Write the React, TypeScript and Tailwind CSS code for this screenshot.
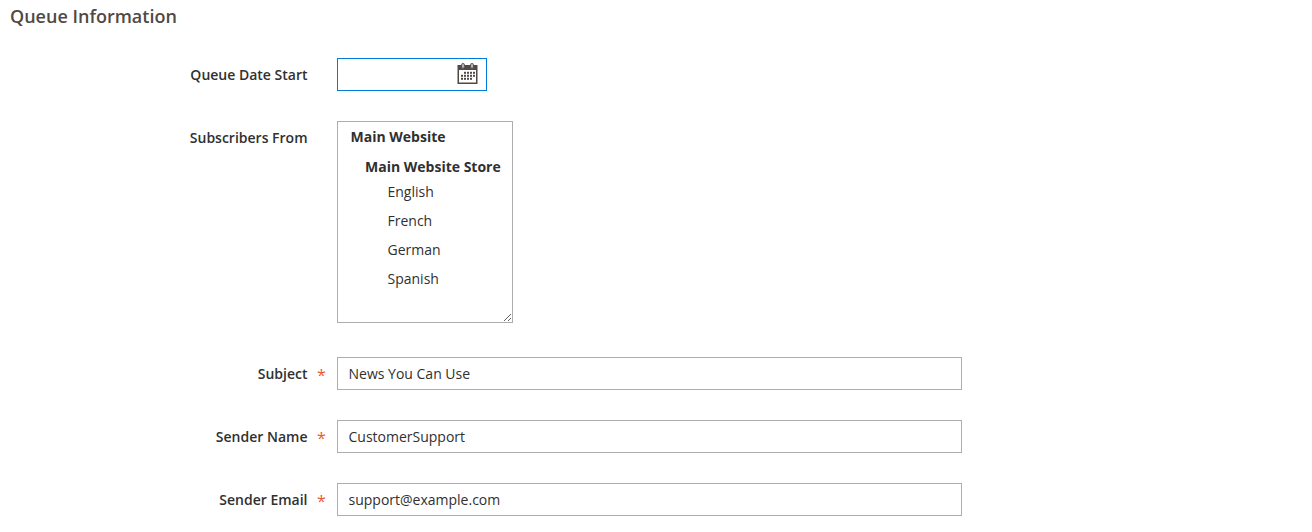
import { FC, ReactNode } from "react";

interface FieldProps {
  label: string;
  required?: boolean;
  children: ReactNode;
  className?: string;
}

const Field: FC<FieldProps> = ({ label, required, children, className = "" }) => (
  <div className={`flex items-start ${className}`}>
    <label className="w-[307.5px] text-right text-[14px] leading-[19px] font-semibold text-[#303030] shrink-0 pt-[7px]">
      {label}
    </label>
    <div className="w-[29.5px] shrink-0 pl-[9.5px] text-[#eb5a2a] text-[16px] leading-[19px] pt-[9px] font-normal">
      {required ? "*" : ""}
    </div>
    {children}
  </div>
);

const TextInput: FC<{ value: string }> = ({ value }) => (
  <input
    readOnly
    value={value}
    className="w-[625px] h-[33px] border border-[#adadad] pl-[10.5px] pr-[11px] text-[14px] text-[#303030] bg-white outline-none"
  />
);

const CalendarIcon = () => (
  <svg width="21" height="21" viewBox="0 0 21 21" className="mb-[2px]">
    <rect x="0.5" y="2" width="20" height="19" fill="#514943" />
    <rect x="2" y="7" width="17" height="12.5" fill="#fff" />
    <rect x="4.5" y="0.4" width="3" height="5" rx="1.5" fill="#a9b4c0" stroke="#514943" strokeWidth="0.8" />
    <rect x="13.5" y="0.4" width="3" height="5" rx="1.5" fill="#a9b4c0" stroke="#514943" strokeWidth="0.8" />
    <g fill="#514943">
      <rect x="7" y="8.8" width="2" height="2" />
      <rect x="10" y="8.8" width="2" height="2" />
      <rect x="13" y="8.8" width="2" height="2" />
      <rect x="16" y="8.8" width="2" height="2" />
      <rect x="4" y="11.8" width="2" height="2" />
      <rect x="7" y="11.8" width="2" height="2" />
      <rect x="10" y="11.8" width="2" height="2" />
      <rect x="13" y="11.8" width="2" height="2" />
      <rect x="16" y="11.8" width="2" height="2" />
      <rect x="4" y="14.8" width="2" height="2" />
      <rect x="7" y="14.8" width="2" height="2" />
      <rect x="10" y="14.8" width="2" height="2" />
      <rect x="13" y="14.8" width="2" height="2" />
    </g>
  </svg>
);

const StoreList = () => (
  <div className="w-[176px] h-[202px] border border-[#adadad] bg-white resize overflow-hidden text-[14px] text-[#303030] leading-[19px] pt-[4px]">
    <div className="pl-[12.5px] font-bold h-[30px] pt-[1px]">Main Website</div>
    <div className="pl-[27px] font-bold h-[25px] pt-[1px] whitespace-nowrap">Main Website Store</div>
    {["English", "French", "German", "Spanish"].map((name) => (
      <div key={name} className="pl-[49.5px] h-[29px] pt-[1px]">
        {name}
      </div>
    ))}
  </div>
);

export default function App() {
  return (
    <div className="w-[1312px] h-[532px] bg-white overflow-hidden font-['Open_Sans',sans-serif]">
      <h2 className="pl-[10px] pt-[4px] text-[18px] leading-[24px] font-semibold text-[#514943]">Queue Information</h2>
      <div className="mt-[30px] flex flex-col">
        <Field label="Queue Date Start">
          <div className="w-[150px] h-[33px] border border-[#007bdb] bg-white flex items-center justify-end pr-[8px]">
            <CalendarIcon />
          </div>
        </Field>
        <Field label="Subscribers From" className="mt-[30px]">
          <StoreList />
        </Field>
        <Field label="Subject" required className="mt-[34px]">
          <TextInput value="News You Can Use" />
        </Field>
        <Field label="Sender Name" required className="mt-[30px]">
          <TextInput value="CustomerSupport" />
        </Field>
        <Field label="Sender Email" required className="mt-[30px]">
          <TextInput value="support@example.com" />
        </Field>
      </div>
    </div>
  );
}
